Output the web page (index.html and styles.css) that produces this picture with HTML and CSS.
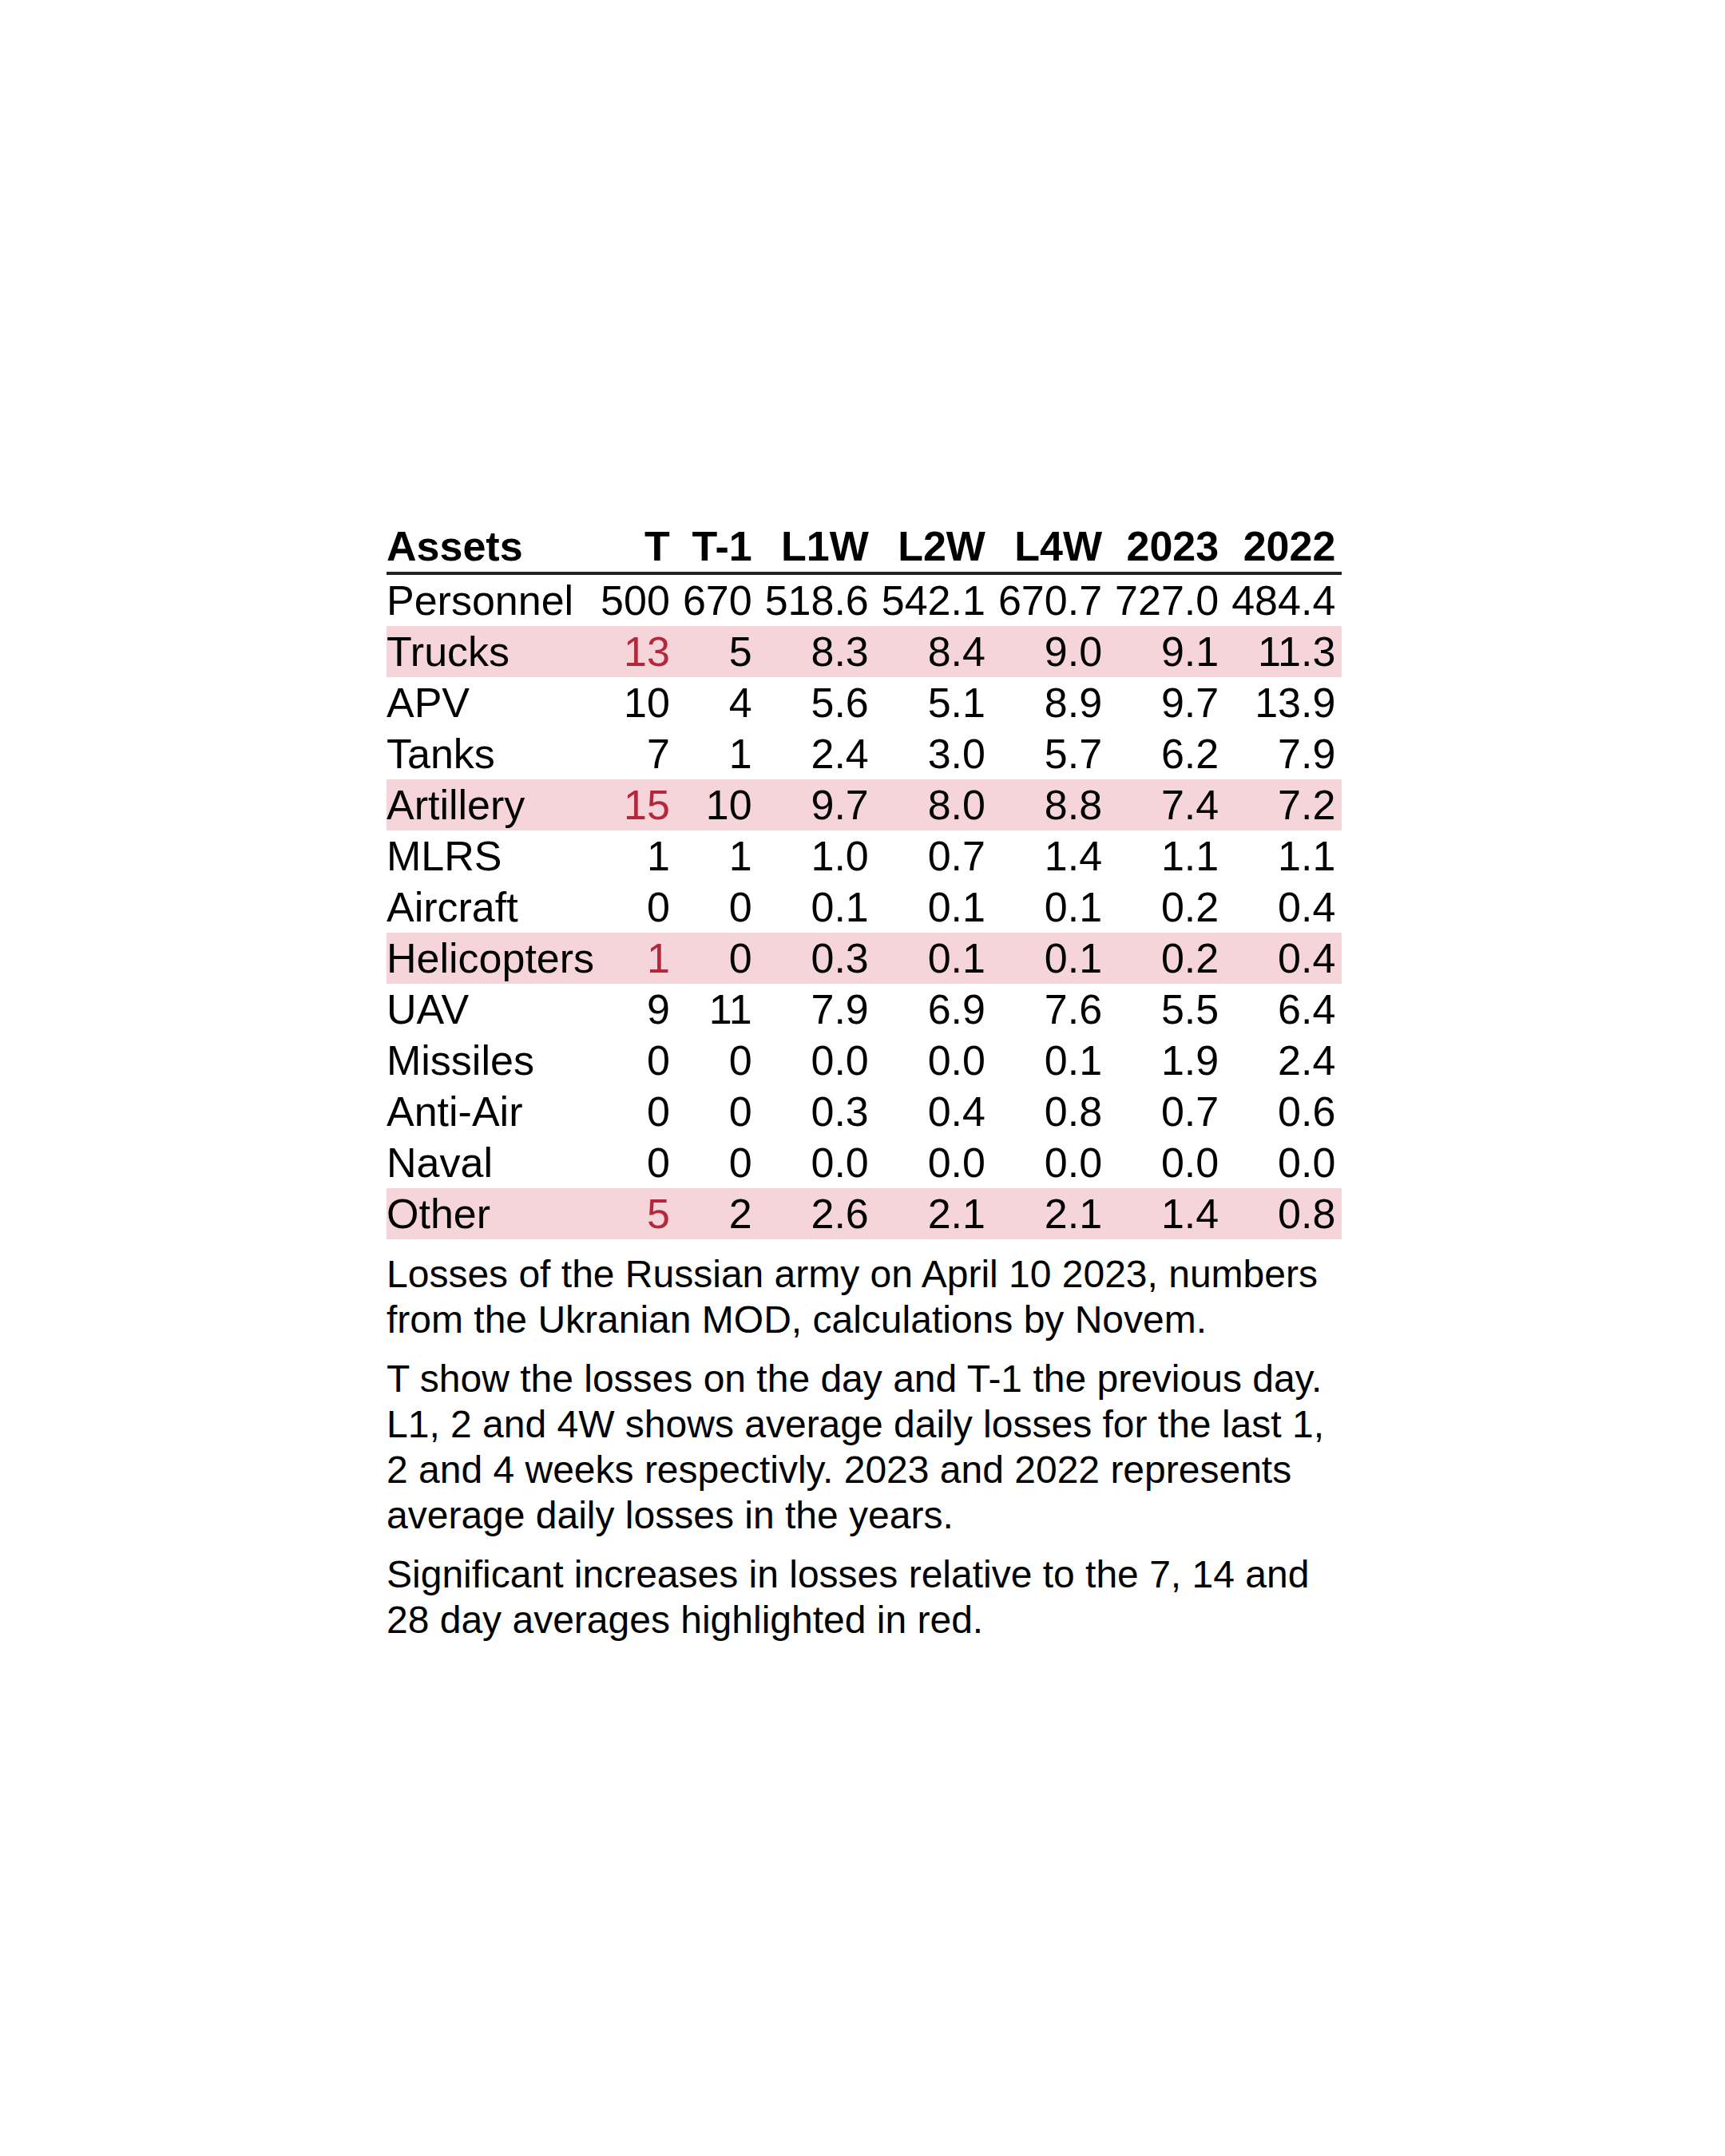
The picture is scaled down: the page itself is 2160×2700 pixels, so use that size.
FILE: index.html
```html
<!DOCTYPE html>
<html lang="en">
<head>
<meta charset="utf-8">
<title>Losses of the Russian army</title>
<link rel="stylesheet" href="styles.css">
</head>
<body>
<div class="sheet">
  <table class="losses">
    <thead>
      <tr>
        <th class="name">Assets</th>
        <th>T</th>
        <th>T-1</th>
        <th>L1W</th>
        <th>L2W</th>
        <th>L4W</th>
        <th>2023</th>
        <th>2022</th>
      </tr>
    </thead>
    <tbody>
      <tr><td class="name">Personnel</td><td>500</td><td>670</td><td>518.6</td><td>542.1</td><td>670.7</td><td>727.0</td><td>484.4</td></tr>
      <tr class="hl"><td class="name">Trucks</td><td class="red">13</td><td>5</td><td>8.3</td><td>8.4</td><td>9.0</td><td>9.1</td><td>11.3</td></tr>
      <tr><td class="name">APV</td><td>10</td><td>4</td><td>5.6</td><td>5.1</td><td>8.9</td><td>9.7</td><td>13.9</td></tr>
      <tr><td class="name">Tanks</td><td>7</td><td>1</td><td>2.4</td><td>3.0</td><td>5.7</td><td>6.2</td><td>7.9</td></tr>
      <tr class="hl"><td class="name">Artillery</td><td class="red">15</td><td>10</td><td>9.7</td><td>8.0</td><td>8.8</td><td>7.4</td><td>7.2</td></tr>
      <tr><td class="name">MLRS</td><td>1</td><td>1</td><td>1.0</td><td>0.7</td><td>1.4</td><td>1.1</td><td>1.1</td></tr>
      <tr><td class="name">Aircraft</td><td>0</td><td>0</td><td>0.1</td><td>0.1</td><td>0.1</td><td>0.2</td><td>0.4</td></tr>
      <tr class="hl"><td class="name">Helicopters</td><td class="red">1</td><td>0</td><td>0.3</td><td>0.1</td><td>0.1</td><td>0.2</td><td>0.4</td></tr>
      <tr><td class="name">UAV</td><td>9</td><td>11</td><td>7.9</td><td>6.9</td><td>7.6</td><td>5.5</td><td>6.4</td></tr>
      <tr><td class="name">Missiles</td><td>0</td><td>0</td><td>0.0</td><td>0.0</td><td>0.1</td><td>1.9</td><td>2.4</td></tr>
      <tr><td class="name">Anti-Air</td><td>0</td><td>0</td><td>0.3</td><td>0.4</td><td>0.8</td><td>0.7</td><td>0.6</td></tr>
      <tr><td class="name">Naval</td><td>0</td><td>0</td><td>0.0</td><td>0.0</td><td>0.0</td><td>0.0</td><td>0.0</td></tr>
      <tr class="hl"><td class="name">Other</td><td class="red">5</td><td>2</td><td>2.6</td><td>2.1</td><td>2.1</td><td>1.4</td><td>0.8</td></tr>
    </tbody>
  </table>
  <div class="notes">
    <p>Losses of the Russian army on April 10 2023, numbers from the Ukranian MOD, calculations by Novem.</p>
    <p>T show the losses on the day and T-1 the previous day. L1, 2 and 4W shows average daily losses for the last 1, 2 and 4 weeks respectivly. 2023 and 2022 represents average daily losses in the years.</p>
    <p>Significant increases in losses relative to the 7, 14 and 28 day averages highlighted in red.</p>
  </div>
</div>
</body>
</html>
```

FILE: styles.css
```css
html, body {
  margin: 0;
  padding: 0;
  background: #ffffff;
}

body {
  font-family: "Liberation Sans", Arial, Helvetica, sans-serif;
  color: #000000;
}

.sheet {
  width: 1196px;
  margin: 652px 0 0 484px;
}

.losses {
  border-collapse: separate;
  border-spacing: 0;
  font-size: 52px;
  line-height: 64px;
}

.losses th,
.losses td {
  height: 64px;
  padding: 0 8px;
  text-align: right;
  white-space: nowrap;
  vertical-align: middle;
}

.losses th {
  font-weight: 700;
  border-bottom: 4px solid #222222;
}

.losses .name {
  padding: 0;
  text-align: left;
}

.losses tr.hl {
  background: #f6d5da;
}

.losses .red {
  color: #b3283a;
}

.notes {
  margin-top: 15px;
  font-size: 48px;
  line-height: 57px;
}

.notes p {
  margin: 0 0 17px 0;
}
```
